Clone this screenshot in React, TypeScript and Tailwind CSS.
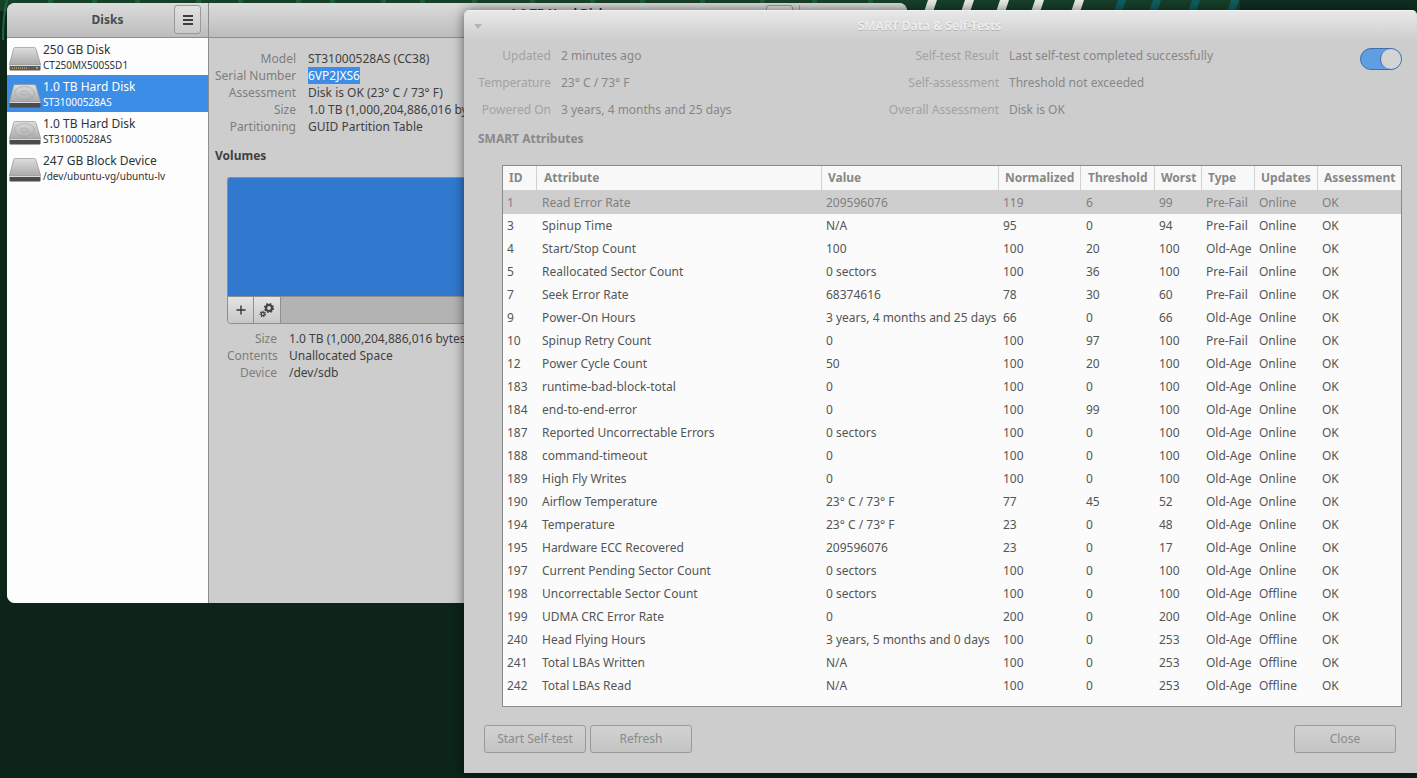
import { Plus, X } from "lucide-react";

const FONT = "font-['Noto_Sans','Open_Sans',sans-serif]";

type Disk = {
  name: string;
  sub: string;
  kind: "ssd" | "hdd" | "plain";
};

const disks: Disk[] = [
  { name: "250 GB Disk", sub: "CT250MX500SSD1", kind: "ssd" },
  { name: "1.0 TB Hard Disk", sub: "ST31000528AS", kind: "hdd" },
  { name: "1.0 TB Hard Disk", sub: "ST31000528AS", kind: "hdd" },
  { name: "247 GB Block Device", sub: "/dev/ubuntu-vg/ubuntu-lv", kind: "plain" },
];

const columns = [
  "ID",
  "Attribute",
  "Value",
  "Normalized",
  "Threshold",
  "Worst",
  "Type",
  "Updates",
  "Assessment",
];

const rows: string[][] = [
  ["1", "Read Error Rate", "209596076", "119", "6", "99", "Pre-Fail", "Online", "OK"],
  ["3", "Spinup Time", "N/A", "95", "0", "94", "Pre-Fail", "Online", "OK"],
  ["4", "Start/Stop Count", "100", "100", "20", "100", "Old-Age", "Online", "OK"],
  ["5", "Reallocated Sector Count", "0 sectors", "100", "36", "100", "Pre-Fail", "Online", "OK"],
  ["7", "Seek Error Rate", "68374616", "78", "30", "60", "Pre-Fail", "Online", "OK"],
  ["9", "Power-On Hours", "3 years, 4 months and 25 days", "66", "0", "66", "Old-Age", "Online", "OK"],
  ["10", "Spinup Retry Count", "0", "100", "97", "100", "Pre-Fail", "Online", "OK"],
  ["12", "Power Cycle Count", "50", "100", "20", "100", "Old-Age", "Online", "OK"],
  ["183", "runtime-bad-block-total", "0", "100", "0", "100", "Old-Age", "Online", "OK"],
  ["184", "end-to-end-error", "0", "100", "99", "100", "Old-Age", "Online", "OK"],
  ["187", "Reported Uncorrectable Errors", "0 sectors", "100", "0", "100", "Old-Age", "Online", "OK"],
  ["188", "command-timeout", "0", "100", "0", "100", "Old-Age", "Online", "OK"],
  ["189", "High Fly Writes", "0", "100", "0", "100", "Old-Age", "Online", "OK"],
  ["190", "Airflow Temperature", "23° C / 73° F", "77", "45", "52", "Old-Age", "Online", "OK"],
  ["194", "Temperature", "23° C / 73° F", "23", "0", "48", "Old-Age", "Online", "OK"],
  ["195", "Hardware ECC Recovered", "209596076", "23", "0", "17", "Old-Age", "Online", "OK"],
  ["197", "Current Pending Sector Count", "0 sectors", "100", "0", "100", "Old-Age", "Online", "OK"],
  ["198", "Uncorrectable Sector Count", "0 sectors", "100", "0", "100", "Old-Age", "Offline", "OK"],
  ["199", "UDMA CRC Error Rate", "0", "200", "0", "200", "Old-Age", "Online", "OK"],
  ["240", "Head Flying Hours", "3 years, 5 months and 0 days", "100", "0", "253", "Old-Age", "Offline", "OK"],
  ["241", "Total LBAs Written", "N/A", "100", "0", "253", "Old-Age", "Offline", "OK"],
  ["242", "Total LBAs Read", "N/A", "100", "0", "253", "Old-Age", "Offline", "OK"],
];

const GRID = "grid grid-cols-[34px_285px_177px_82px_74px_47px_53px_63px_83px]";

function Wallpaper() {
  const green = [48, 92, 135, 196, 238, 296, 330, 381, 420, 472, 530, 590, 640, 700, 760, 812, 868];
  const white = [928, 965, 1000, 1035, 1075];
  const teal = [1118, 1153, 1192, 1231];
  return (
    <svg className="absolute inset-0" width="1417" height="778">
      <rect width="1417" height="778" fill="#0d2419" />
      <rect width="1300" height="11" fill="#17402b" />
      <rect x="1240" width="177" height="30" fill="#0f2e22" />
      <rect x="900" width="340" height="12" fill="#17402b" />
      {green.map((x) => (
        <rect key={x} x={x} width="5" height="6" fill="#1c5c36" />
      ))}
      {white.map((x) => (
        <polygon key={x} points={`${x},0 ${x + 9},0 ${x + 5},12 ${x - 4},12`} fill="#e8ece8" />
      ))}
      {teal.map((x) => (
        <polygon key={x} points={`${x},0 ${x + 8},0 ${x + 4},12 ${x - 4},12`} fill="#0f5f62" />
      ))}
      <path d="M7,0 Q3,14 3,40" stroke="#1b6a3b" strokeWidth="2" fill="none" />
    </svg>
  );
}

function DiskIcon({ kind }: { kind: Disk["kind"] }) {
  return (
    <svg width="32" height="25" viewBox="0 0 32 25" className="mt-[6px] shrink-0">
      <defs>
        <linearGradient id="disk-top" x1="0" y1="0" x2="0" y2="1">
          <stop offset="0" stopColor="#dedede" />
          <stop offset="1" stopColor="#a9a9a9" />
        </linearGradient>
      </defs>
      <path d="M5.5 0.5 H25.5 Q26.5 0.5 27 2 L31.5 17 V18 H0.5 V17 L4.5 2 Q5 0.5 5.5 0.5 Z" fill="url(#disk-top)" stroke="#8a8a8a" strokeWidth="0.6" />
      {kind === "hdd" && (
        <g fill="none" stroke="#a0a0a0" strokeWidth="0.6">
          <ellipse cx="15.5" cy="9" rx="10" ry="6.5" />
          <ellipse cx="15.5" cy="9" rx="3.5" ry="2" />
          <path d="M24 14 L19 10" />
        </g>
      )}
      <rect x="0.5" y="18" width="31" height="5.5" rx="1" fill={kind === "ssd" ? "#5c5c5c" : "#4b4b4b"} />
      <rect x="0.5" y="18" width="31" height="1" fill="#dadada" />
      {kind === "ssd" && (
        <g fill="#e6c94a">
          {[3, 5, 7, 9, 11, 13, 15, 17].map((x) => (
            <rect key={x} x={x} y="20.5" width="1" height="1" />
          ))}
          <rect x="27" y="20" width="2" height="1.5" fill="#8ed36b" />
        </g>
      )}
    </svg>
  );
}

function Gears() {
  return (
    <svg width="16" height="16" viewBox="0 0 16 16">
      <g fill="none" stroke="#444">
        <circle cx="10" cy="6" r="3" strokeWidth="2.2" />
        <circle cx="10" cy="6" r="4.3" strokeWidth="1.6" strokeDasharray="1.7 1.7" />
        <circle cx="3.8" cy="12" r="1.6" strokeWidth="1.4" />
        <circle cx="3.8" cy="12" r="2.7" strokeWidth="1.2" strokeDasharray="1.2 1.2" />
      </g>
    </svg>
  );
}

function MainWindow() {
  const info = [
    ["Model", "ST31000528AS (CC38)"],
    ["Serial Number", "6VP2JXS6"],
    ["Assessment", "Disk is OK (23° C / 73° F)"],
    ["Size", "1.0 TB (1,000,204,886,016 bytes)"],
    ["Partitioning", "GUID Partition Table"],
  ];
  const volume = [
    ["Size", "1.0 TB (1,000,204,886,016 bytes)"],
    ["Contents", "Unallocated Space"],
    ["Device", "/dev/sdb"],
  ];
  return (
    <div className="absolute left-[7px] top-[3px] flex h-[600px] w-[900px] flex-col overflow-hidden rounded-t-[8px] rounded-bl-[8px] bg-[#cdcdcd] text-[12px]">
      <div className="flex h-[35px] shrink-0 border-b border-[#8e8e8e] bg-gradient-to-b from-[#dcdcdc] to-[#bcbcbc]">
        <div className="relative flex w-[201px] items-center justify-center font-bold text-[#4a4a4a]">
          Disks
          <button className="absolute right-[7px] top-[2px] flex h-[29px] w-[27px] items-center justify-center rounded-[3px] border border-[#999] bg-gradient-to-b from-[#e2e2e2] to-[#c9c9c9]">
            <span className="flex flex-col gap-[2px]">
              <span className="h-[2px] w-[10px] bg-[#3d3d3d]" />
              <span className="h-[2px] w-[10px] bg-[#3d3d3d]" />
              <span className="h-[2px] w-[10px] bg-[#3d3d3d]" />
            </span>
          </button>
        </div>
        <div className="w-[1px] bg-[#8e8e8e]" />
        <div className="grid flex-1 grid-cols-[1fr_auto_1fr]">
          <div />
          <div className="flex flex-col items-center pt-[2px] text-[#333]">
            <span className="font-bold leading-[18px]">1.0 TB Hard Disk</span>
            <span className="text-[10px] leading-[13px]">/dev/sdb</span>
          </div>
          <div className="flex items-start gap-[6px] pl-[160px] pt-[2px]">
            <button className="h-[29px] w-[27px] rounded-[3px] border border-[#999] bg-gradient-to-b from-[#e2e2e2] to-[#c9c9c9]" />
            <div className="h-[34px] w-[1px] bg-[#aaa]" />
          </div>
        </div>
      </div>
      <div className="flex min-h-0 flex-1">
        <div className="w-[201px] shrink-0 bg-[#fdfdfd]">
          {disks.map((d, i) => (
            <div
              key={i}
              className={`flex h-[37px] items-center gap-[2px] pl-[2px] ${i === 1 ? "bg-[#3b8de6] text-white" : "text-[#2e3436]"}`}
            >
              <DiskIcon kind={d.kind} />
              <div className="flex min-w-0 flex-col">
                <span className="text-[12px] leading-[17px]">{d.name}</span>
                <span className="text-[10px] leading-[15px]">{d.sub}</span>
              </div>
            </div>
          ))}
        </div>
        <div className="w-[1px] bg-[#8e8e8e]" />
        <div className="min-w-0 flex-1 pt-[12px]">
          <div className="grid grid-cols-[81px_1fr] gap-x-[12px] pl-[6px] leading-[17px]">
            {info.map(([label, value]) => (
              <div key={label} className="contents">
                <span className="whitespace-nowrap text-right text-[#7d7d7d]">{label}</span>
                <span className="text-[#3f3f3f]">
                  {label === "Serial Number" ? (
                    <span className="bg-[#3b8de6] text-white">{value}</span>
                  ) : (
                    value
                  )}
                </span>
              </div>
            ))}
          </div>
          <div className="mt-[12px] pl-[6px] font-bold leading-[17px] text-[#3f3f3f]">Volumes</div>
          <div className="ml-[18px] mr-[12px] mt-[13px]">
            <div className="h-[119px] rounded-t-[3px] border border-b-0 border-[#8e8e8e] bg-[#3079cf]" />
            <div className="flex h-[28px] overflow-hidden rounded-b-[4px] border border-[#8e8e8e] bg-[#b3b3b3]">
              <button className="flex w-[26px] items-center justify-center border-r border-[#8e8e8e] bg-gradient-to-b from-[#e4e4e4] to-[#c8c8c8]">
                <Plus size={14} strokeWidth={2.4} color="#333" />
              </button>
              <button className="flex w-[27px] items-center justify-center border-r border-[#8e8e8e] bg-gradient-to-b from-[#e4e4e4] to-[#c8c8c8]">
                <Gears />
              </button>
            </div>
          </div>
          <div className="ml-[18px] mt-[6px] grid grid-cols-[50px_1fr] gap-x-[12px] leading-[17px]">
            {volume.map(([label, value]) => (
              <div key={label} className="contents">
                <span className="text-right text-[#7d7d7d]">{label}</span>
                <span className="text-[#3f3f3f]">{value}</span>
              </div>
            ))}
          </div>
        </div>
      </div>
    </div>
  );
}

function DialogButton({ label }: { label: string }) {
  return (
    <button className="h-[28px] w-[102px] rounded-[3px] border border-[#9a9a9a] bg-gradient-to-b from-[#d2d2d2] to-[#c4c4c4] text-[12px] text-[#8a8a8a]">
      {label}
    </button>
  );
}

function SmartDialog() {
  const left = [
    ["Updated", "2 minutes ago"],
    ["Temperature", "23° C / 73° F"],
    ["Powered On", "3 years, 4 months and 25 days"],
  ];
  const right = [
    ["Self-test Result", "Last self-test completed successfully"],
    ["Self-assessment", "Threshold not exceeded"],
    ["Overall Assessment", "Disk is OK"],
  ];
  return (
    <div className="absolute left-[464px] top-[10px] flex h-[763px] w-[953px] flex-col rounded-t-[5px] border-t border-[#f2f2f2] bg-[#cdcdcd] text-[12px] shadow-[0_0_12px_rgba(0,0,0,0.55)]">
      <div className="flex h-[30px] shrink-0 items-center justify-between rounded-t-[5px] bg-gradient-to-b from-[#e8e8e8] to-[#cdcdcd] pl-[10px] pr-[2px]">
        <span className="h-0 w-0 border-x-[4px] border-t-[5px] border-x-transparent border-t-[#b4b4b4]" />
        <span className="font-bold text-[#ececec] [text-shadow:0_1px_0_#b5b5b5]">SMART Data &amp; Self-Tests</span>
        <span className="flex items-center gap-[13px] text-[#dcdcdc]">
          <Plus size={12} />
          <X size={13} />
        </span>
      </div>
      <div className="flex pt-[1px] leading-[27px]">
        <div className="grid w-[424px] grid-cols-[87px_1fr] gap-x-[10px]">
          {left.map(([label, value]) => (
            <div key={label} className="contents">
              <span className="text-right text-[#a2a2a2]">{label}</span>
              <span className="text-[#878787]">{value}</span>
            </div>
          ))}
        </div>
        <div className="grid flex-1 grid-cols-[111px_1fr] gap-x-[10px]">
          {right.map(([label, value]) => (
            <div key={label} className="contents">
              <span className="whitespace-nowrap text-right text-[#a2a2a2]">{label}</span>
              <span className="text-[#878787]">{value}</span>
            </div>
          ))}
        </div>
        <div className="mr-[15px] mt-[6px] flex h-[22px] w-[42px] shrink-0 justify-end rounded-full border border-[#3f6fa8] bg-[#5f9ee3]">
          <span className="h-[20px] w-[21px] rounded-full border-l border-[#3f6fa8] bg-[#d4d4d4]" />
        </div>
      </div>
      <div className="ml-[14px] mt-[7px] font-bold leading-[18px] text-[#8a8a8a]">SMART Attributes</div>
      <div className="ml-[38px] mr-[15px] mt-[17px] h-[542px] shrink-0 overflow-hidden border border-[#8a8a8a] bg-[#fbfbfb]">
        <div className={`${GRID} h-[24px] bg-[#f8f8f8] font-bold text-[#878787]`}>
          {columns.map((c, i) => (
            <div
              key={c}
              className={`flex items-center ${i < columns.length - 1 ? "border-r border-[#d0d0d0]" : ""} ${i === 1 || i === 4 ? "pl-[7px]" : "pl-[6px]"}`}
            >
              {c}
            </div>
          ))}
        </div>
        {rows.map((row, r) => (
          <div
            key={row[0]}
            className={`${GRID} items-center ${r === 0 ? "h-[24px] bg-[#cecece] pt-[1px] text-[#7f7f7f]" : "h-[23px] text-[#555]"}`}
          >
            {row.map((cell, c) => (
              <div key={c} className={`whitespace-nowrap ${c === 1 || c === 4 ? "pl-[5px]" : "pl-[4px]"}`}>
                {cell}
              </div>
            ))}
          </div>
        ))}
      </div>
      <div className="mt-[18px] flex justify-between pl-[20px] pr-[21px]">
        <div className="flex gap-[4px]">
          <DialogButton label="Start Self-test" />
          <DialogButton label="Refresh" />
        </div>
        <DialogButton label="Close" />
      </div>
    </div>
  );
}

export default function App() {
  return (
    <div className={`relative h-[778px] w-[1417px] overflow-hidden ${FONT}`}>
      <Wallpaper />
      <MainWindow />
      <SmartDialog />
    </div>
  );
}
